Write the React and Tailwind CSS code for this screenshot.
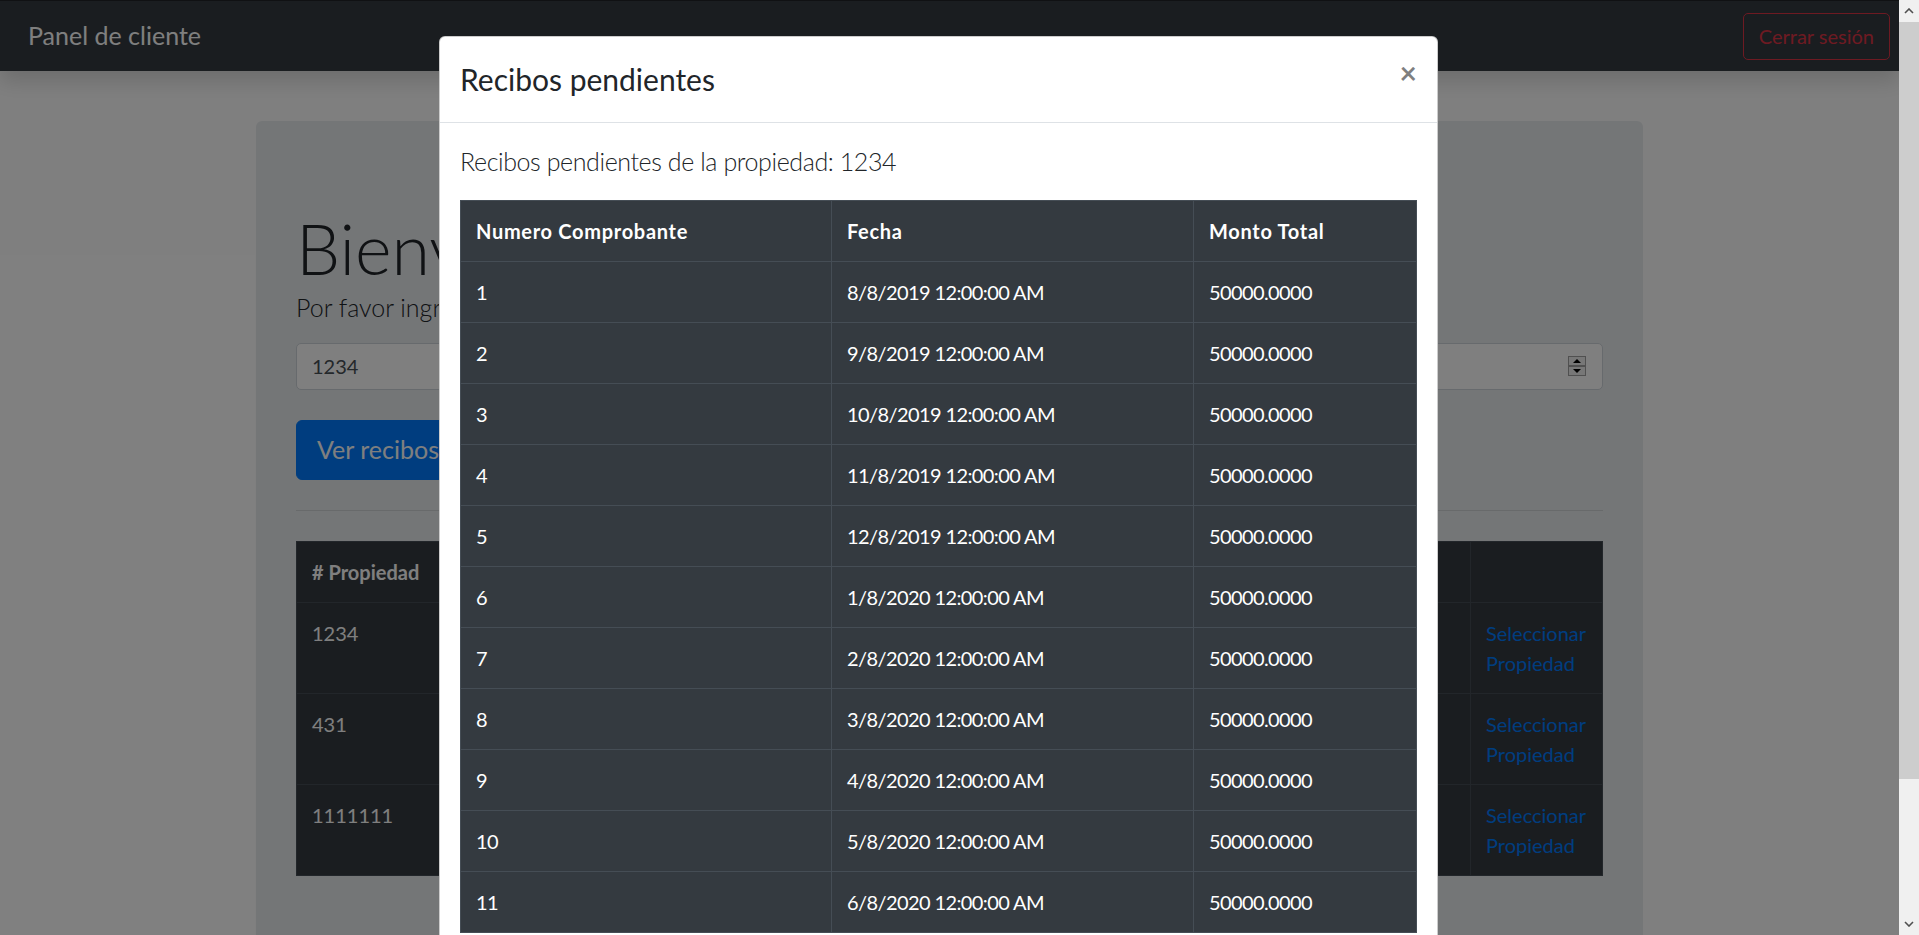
import React from 'react';

const recibos = [
    { numero: 1, fecha: '8/8/2019 12:00:00 AM', monto: '50000.0000' },
    { numero: 2, fecha: '9/8/2019 12:00:00 AM', monto: '50000.0000' },
    { numero: 3, fecha: '10/8/2019 12:00:00 AM', monto: '50000.0000' },
    { numero: 4, fecha: '11/8/2019 12:00:00 AM', monto: '50000.0000' },
    { numero: 5, fecha: '12/8/2019 12:00:00 AM', monto: '50000.0000' },
    { numero: 6, fecha: '1/8/2020 12:00:00 AM', monto: '50000.0000' },
    { numero: 7, fecha: '2/8/2020 12:00:00 AM', monto: '50000.0000' },
    { numero: 8, fecha: '3/8/2020 12:00:00 AM', monto: '50000.0000' },
    { numero: 9, fecha: '4/8/2020 12:00:00 AM', monto: '50000.0000' },
    { numero: 10, fecha: '5/8/2020 12:00:00 AM', monto: '50000.0000' },
    { numero: 11, fecha: '6/8/2020 12:00:00 AM', monto: '50000.0000' },
];

const propiedades = ['1234', '431', '1111111'];

// celdas estilo table-dark de bootstrap (a 125%)
const cell = 'px-[15px] py-[15px] leading-[30px] border border-[#454d55] text-left align-top';

const Spinner = () => (
    <svg width="18" height="20" viewBox="0 0 18 20">
        <rect x="0.5" y="0.5" width="17" height="9" fill="#efefef" stroke="#a0a0a0" />
        <rect x="0.5" y="10.5" width="17" height="9" fill="#efefef" stroke="#a0a0a0" />
        <path d="M5 7 L9 3 L13 7 Z" fill="#000" />
        <path d="M5 13 L9 17 L13 13 Z" fill="#000" />
    </svg>
);

const Scrollbar = () => (
    <div className="w-[20px] h-full bg-[#f0f0f0] flex flex-col shrink-0">
        <div className="h-[22px] flex items-center justify-center">
            <svg width="10" height="6" viewBox="0 0 10 6">
                <path d="M1 5 L5 1 L9 5" stroke="#505050" strokeWidth="1.6" fill="none" />
            </svg>
        </div>
        <div className="h-[757px] bg-[#cdcdcd]"></div>
        <div className="flex-1"></div>
        <div className="h-[22px] flex items-center justify-center">
            <svg width="10" height="6" viewBox="0 0 10 6">
                <path d="M1 1 L5 5 L9 1" stroke="#505050" strokeWidth="1.6" fill="none" />
            </svg>
        </div>
    </div>
);

const Page = () => (
    <div className="h-full bg-white">
        <nav className="relative h-[71px] border-t border-[#202326] bg-[#343a40] flex items-center justify-between pl-[28px] pr-[9px] shadow-[0_10px_20px_rgba(0,0,0,0.15)]">
            <span className="text-[25px] leading-[37.5px] text-white">Panel de cliente</span>
            <button className="border border-[#dc3545] text-[#dc3545] text-[20px] leading-[30px] px-[15px] py-[7.5px] rounded-[5px]">
                Cerrar sesión
            </button>
        </nav>

        <div className="w-[1387px] mx-auto mt-[50px] bg-[#e9ecef] rounded-[6px] px-[40px] pt-[80px] pb-[80px] text-[#212529]">
            <h1 className="pt-[5px] text-[70px] font-light leading-[84px]">Bienvenido</h1>
            <p className="-mt-[1px] text-[25px] font-light leading-[37.5px] mb-[16px]">Por favor ingrese el número de propiedad</p>

            <div className="h-[47.5px] bg-white border border-[#ced4da] rounded-[5px] pl-[15px] pr-[16px] flex items-center justify-between text-[20px] text-[#495057]">
                <span>1234</span>
                <Spinner />
            </div>

            <button className="mt-[30px] bg-[#007bff] border border-[#007bff] text-white text-[25px] leading-[37.5px] px-[20px] py-[10px] rounded-[6px]">
                Ver recibos
            </button>

            <hr className="my-[30px] border-t border-black/10" />

            <table className="w-full table-fixed border-collapse bg-[#343a40] text-white text-[20px]">
                <colgroup>
                    <col className="w-[300px]" />
                    <col className="w-[450px]" />
                    <col />
                    <col className="w-[132px]" />
                </colgroup>
                <thead>
                    <tr>
                        <th className={`${cell} font-bold`}># Propiedad</th>
                        <th className={cell}></th>
                        <th className={cell}></th>
                        <th className={cell}></th>
                    </tr>
                </thead>
                <tbody>
                    {propiedades.map((p) => (
                        <tr key={p}>
                            <td className={cell}>{p}</td>
                            <td className={cell}></td>
                            <td className={cell}></td>
                            <td className={cell}>
                                <a className="text-[#007bff]">Seleccionar Propiedad</a>
                            </td>
                        </tr>
                    ))}
                </tbody>
            </table>
        </div>
    </div>
);

const Modal = () => (
    <div className="ml-[439px] mt-[36px] w-[999px] bg-white rounded-[6px] border border-black/20 text-[#212529]">
        <div className="flex items-start justify-between p-[20px] border-b border-[#dee2e6]">
            <h4 className="text-[30px] leading-[45px]">Recibos pendientes</h4>
            <button className="p-[20px] -m-[20px] ml-auto text-[30px] leading-[30px] font-bold text-black/50">×</button>
        </div>
        <div className="p-[20px]">
            <p className="text-[25px] font-light leading-[37.5px] tracking-[-0.4px] mb-[19px]">Recibos pendientes de la propiedad: 1234</p>
            <table className="w-full table-fixed border-collapse bg-[#343a40] text-white text-[20px]">
                <colgroup>
                    <col className="w-[371px]" />
                    <col className="w-[362px]" />
                    <col />
                </colgroup>
                <thead>
                    <tr>
                        <th className={`${cell} font-bold tracking-[0.7px]`}>Numero Comprobante</th>
                        <th className={`${cell} font-bold tracking-[0.7px]`}>Fecha</th>
                        <th className={`${cell} font-bold tracking-[0.7px]`}>Monto Total</th>
                    </tr>
                </thead>
                <tbody>
                    {recibos.map((r) => (
                        <tr key={r.numero}>
                            <td className={`${cell} tracking-[-0.6px]`}>{r.numero}</td>
                            <td className={`${cell} tracking-[-0.6px]`}>{r.fecha}</td>
                            <td className={`${cell} tracking-[-0.6px]`}>{r.monto}</td>
                        </tr>
                    ))}
                </tbody>
            </table>
        </div>
    </div>
);

export default function App() {
    return (
        <div className="w-[1919px] h-[935px] overflow-hidden flex font-['Lato',sans-serif]">
            <div className="relative flex-1 h-full overflow-hidden">
                <Page />
                <div className="absolute inset-0 z-30 bg-black/50"></div>
                <div className="absolute inset-0 z-40">
                    <Modal />
                </div>
            </div>
            <Scrollbar />
        </div>
    );
}
